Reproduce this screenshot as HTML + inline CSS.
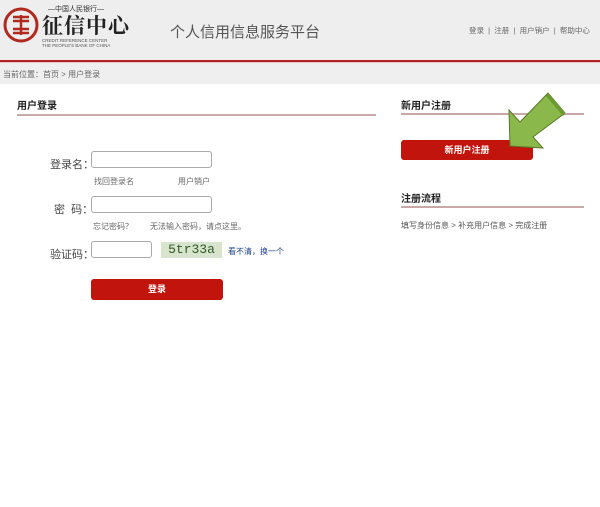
<!DOCTYPE html>
<html><head><meta charset="utf-8"><style>
*{margin:0;padding:0;box-sizing:border-box}
body{width:600px;height:507px;background:#fff;font-family:"Liberation Sans","Noto Sans CJK SC",sans-serif;position:relative;overflow:hidden;color:#333}
.a{position:absolute;white-space:nowrap}
.hd{left:0;top:0;width:600px;height:60px;background:#eeeeee}
.red{left:0;top:60px;width:600px;height:2px;background:#b02020}
.bc{left:0;top:62px;width:600px;height:22px;background:#efefef;border-top:1px solid #e8c8c8}
.inp{position:absolute;border:1px solid #aaa;border-radius:3px;background:#fff}
.btn{position:absolute;background:#c0140c;border-radius:3px;color:#fff;font-size:9px;font-weight:bold;text-align:center}
.ln{position:absolute;height:2px;background:#c9a8a8}
.s{font-size:8px;color:#666}
</style></head><body>
<div class="a hd"></div>
<div class="a red"></div>
<div class="a bc"></div>
<svg class="a" style="left:3px;top:7px" width="36" height="36" viewBox="0 0 36 36"><circle cx="18" cy="18" r="16" fill="none" stroke="#b02a20" stroke-width="3"/><path d="M10 10h16M10 14h16M18 8v20M10 22h16M10 26h16" stroke="#b02a20" stroke-width="2.5" fill="none"/></svg>
<div class="a" style="left:48px;top:4px;font-size:7px;color:#333">—中国人民银行—</div>
<div class="a" style="left:42px;top:10px;font-size:21px;font-weight:bold;font-family:'Noto Serif CJK SC',serif;color:#222;letter-spacing:1px">征信中心</div>
<div class="a" style="left:42px;top:38px;font-size:4.5px;color:#555;line-height:5px">CREDIT REFERENCE CENTER<br>THE PEOPLE'S BANK OF CHINA</div>
<div class="a" style="left:170px;top:21px;font-size:15px;color:#555">个人信用信息服务平台</div>
<div class="a" style="left:469px;top:25px;font-size:7.5px;color:#666">登录 &nbsp;|&nbsp; 注册 &nbsp;|&nbsp; 用户销户 &nbsp;|&nbsp; 帮助中心</div>
<div class="a" style="left:3px;top:69px;font-size:8px;color:#666">当前位置：首页 &gt; 用户登录</div>
<div class="a" style="left:17px;top:97px;font-size:10px;font-weight:bold;color:#222">用户登录</div>
<div class="ln" style="left:17px;top:114px;width:359px"></div>
<div class="a" style="left:50px;top:156px;font-size:11px;color:#444">登录名：</div>
<div class="inp" style="left:91px;top:151px;width:121px;height:17px"></div>
<div class="a s" style="left:94px;top:176px">找回登录名</div>
<div class="a s" style="left:178px;top:176px">用户销户</div>
<div class="a" style="left:54px;top:201px;font-size:11px;color:#444">密 &nbsp;码：</div>
<div class="inp" style="left:91px;top:196px;width:121px;height:17px"></div>
<div class="a s" style="left:93px;top:221px">忘记密码？</div>
<div class="a s" style="left:150px;top:221px">无法输入密码，请点这里。</div>
<div class="a" style="left:50px;top:246px;font-size:11px;color:#444">验证码：</div>
<div class="inp" style="left:91px;top:241px;width:61px;height:17px"></div>
<div class="a" style="left:161px;top:242px;width:61px;height:16px;background:#d8e4cc;color:#2e5a2a;font-size:13px;font-family:'Liberation Mono',monospace;text-align:center;line-height:16px">5tr33a</div>
<div class="a" style="left:228px;top:246px;font-size:8px;color:#1d3f8a">看不清，换一个</div>
<div class="btn" style="left:91px;top:279px;width:132px;height:21px;line-height:21px">登录</div>
<div class="a" style="left:401px;top:97px;font-size:10px;font-weight:bold;color:#222">新用户注册</div>
<div class="ln" style="left:401px;top:113px;width:183px"></div>
<div class="btn" style="left:401px;top:140px;width:132px;height:20px;line-height:20px">新用户注册</div>
<svg class="a" style="left:0;top:0" width="600" height="200"><polygon points="509,110 520,122 548,93 565,113 533,137 543,148 510,146" fill="#8ab84a" stroke="#5a7a2a" stroke-width="1"/><polygon points="548,93 565,113 563,116 546,96" fill="#6a9a30"/></svg>
<div class="a" style="left:401px;top:190px;font-size:10px;font-weight:bold;color:#222">注册流程</div>
<div class="ln" style="left:401px;top:206px;width:183px"></div>
<div class="a" style="left:401px;top:220px;font-size:8px;color:#555">填写身份信息 &gt; 补充用户信息 &gt; 完成注册</div>
</body></html>
